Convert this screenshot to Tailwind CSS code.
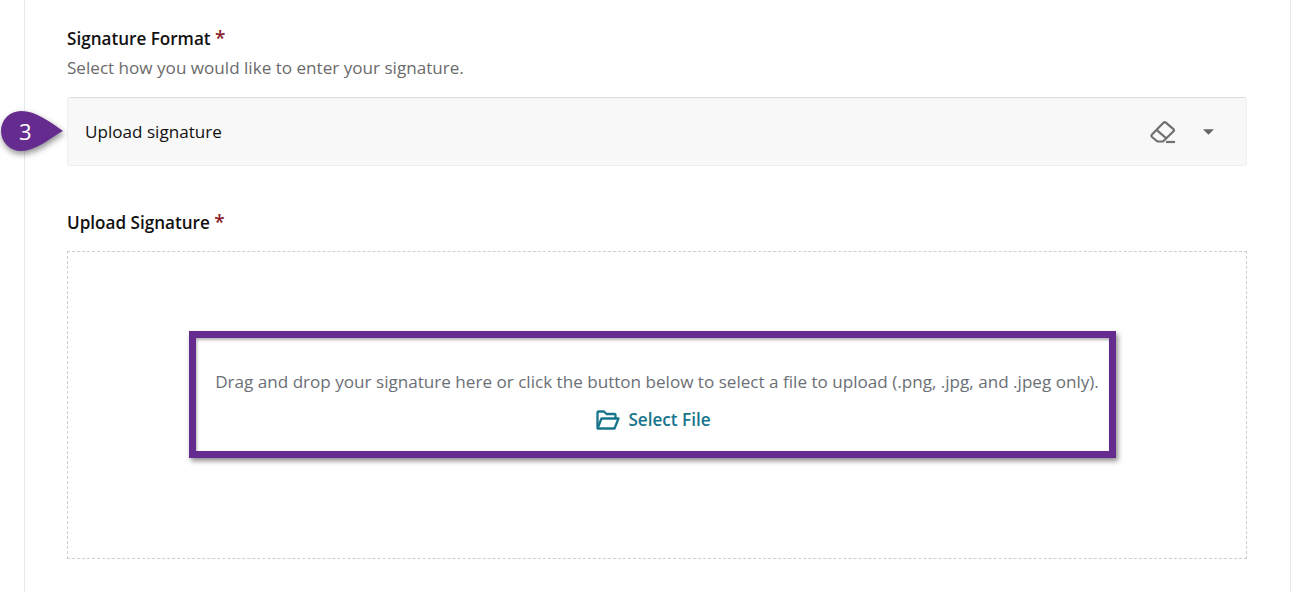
<!DOCTYPE html>
<html lang="en">
<head>
    <meta charset="UTF-8">
    <title>Signature Format</title>
    <script src="https://cdn.jsdelivr.net/npm/@tailwindcss/browser@4"></script>
</head>
<body class="bg-white overflow-hidden font-['Open_Sans',sans-serif]">
    <div class="relative w-[1291px] h-[592px] overflow-hidden">
        <!-- Content panel -->
        <div class="ml-6 h-[592px] border-x border-[#e8e8e8] pl-[42px] pr-[43px] pt-[27px]">
            <div class="h-[22px] text-[17.1px] leading-[24px] font-semibold text-[#111111]">Signature Format <span class="text-[#8a1c2c] text-[19px] leading-none">*</span></div>
            <p class="mt-2 text-[17.1px] leading-[22px] text-[#6b6b6b]">Select how you would like to enter your signature.</p>

            <!-- Select -->
            <div class="mt-[18px] h-[69px] flex items-center rounded border border-[#efefef] border-t-[#dedede] bg-[#f8f8f8] pl-[17px] pr-[32px]">
                <span class="flex-1 text-[17.1px] text-[#111111]">Upload signature</span>
                <svg class="w-[26px] h-[24px]" viewBox="0 0 26 24" fill="none" stroke="#6f6f6f" stroke-width="2.200" stroke-linejoin="round">
                    <path d="M2 14.500 13.700 2.600a1.600 1.600 0 0 1 2.200 0l7.500 6.500a1.600 1.600 0 0 1 .1 2.200L13 21.500H7.500L2 17a1.700 1.700 0 0 1 0-2.500Z"/>
                    <path d="M6.500 9.800 16.500 18.500"/>
                    <path d="M16 22h9"/>
                </svg>
                <svg class="ml-[27px] w-[11px] h-[6px]" viewBox="0 0 10 5"><path d="M0 0h10L5 5Z" fill="#666666"/></svg>
            </div>

            <div class="mt-[45px] h-[22px] text-[17.1px] leading-[24px] font-semibold text-[#111111]">Upload Signature <span class="text-[#8a1c2c] text-[19px] leading-none">*</span></div>

            <!-- Drop zone -->
            <div class="mt-[18px] h-[308px] border border-dashed border-[#cfcfcf] flex flex-col items-center justify-center pb-2">
                <p class="text-[17.1px] leading-[22px] text-[#6b6f76]">Drag and drop your signature here or click the button below to select a file to upload (.png, .jpg, and .jpeg only).</p>
                <div class="mt-4 mr-[7px] flex items-center gap-2 text-[17.1px] leading-[22px] font-semibold text-[#17758c]">
                    <svg class="w-6 h-5" viewBox="0 0 24 20" fill="none" stroke="#17758c" stroke-width="2.300" stroke-linejoin="round">
                        <path d="M1.500 17.500V2.500a1 1 0 0 1 1-1h5.500l2.500 2.500h8a1 1 0 0 1 1 1V8"/>
                        <path d="M1.500 18.500 5.500 8.500h17l-4 10Z"/>
                    </svg>
                    <span>Select File</span>
                </div>
            </div>
        </div>

        <!-- Annotation: highlight box -->
        <div class="absolute left-[189px] top-[331px] w-[927px] h-[127px] border-[7px] border-[#652b8f] shadow-[2px_3px_5px_rgba(0,0,0,0.45),inset_1px_2px_3px_rgba(0,0,0,0.3)]"></div>

        <!-- Annotation: step marker -->
        <div class="absolute left-0 top-[110px] w-[66px] h-[44px]">
            <svg class="absolute inset-0 drop-shadow-[1px_3px_3px_rgba(0,0,0,0.45)]" width="66" height="44" viewBox="0 0 66 44">
                <path d="M21 1C36 1 50 12 63 21 50 28 36 41 21 41A20 20 0 0 1 21 1Z" fill="#652b8f"/>
            </svg>
            <span class="absolute left-[19px] top-[9px] text-[22px] leading-[24px] text-white">3</span>
        </div>
    </div>
</body>
</html>
